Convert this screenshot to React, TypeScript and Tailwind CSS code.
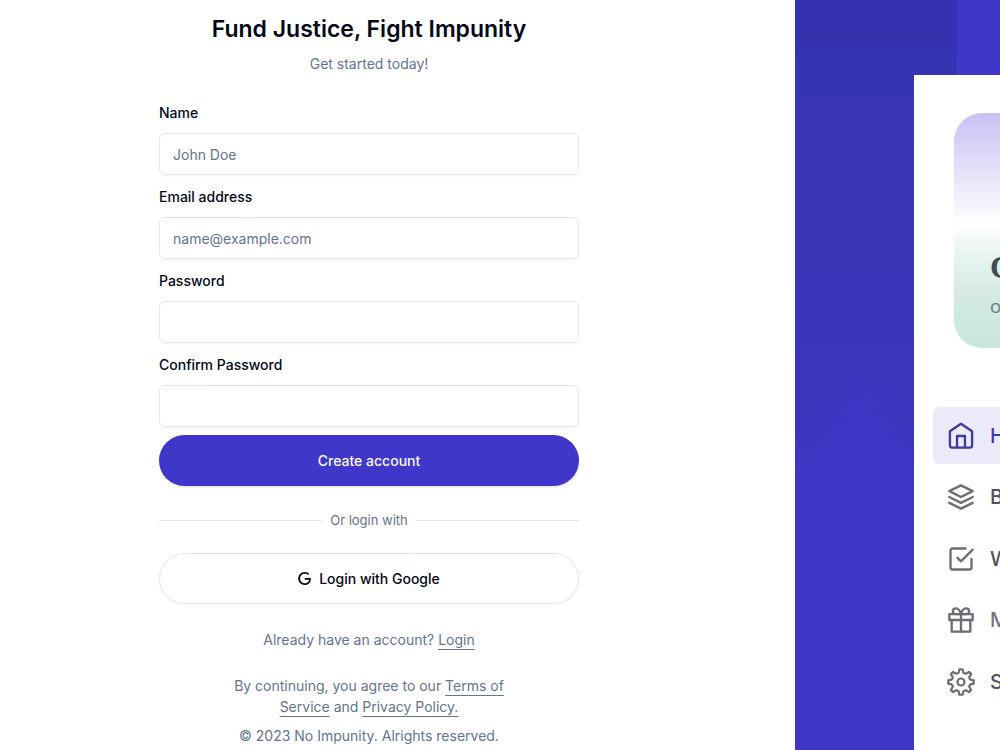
import { useState } from 'react';
import type { FormEvent, ReactNode } from 'react';
import { FiLayers, FiCheckSquare, FiGift } from 'react-icons/fi';
import { SiGoogle } from 'react-icons/si';
import clsx from 'clsx';

const fields = [
  { id: 'name', label: 'Name', type: 'text', placeholder: 'John Doe' },
  { id: 'email', label: 'Email address', type: 'email', placeholder: 'name@example.com' },
  { id: 'password', label: 'Password', type: 'password', placeholder: '' },
  { id: 'confirmPassword', label: 'Confirm Password', type: 'password', placeholder: '' },
];

function HomeIcon({ className }: { className?: string }) {
  return (
    <svg
      viewBox="0 0 24 24"
      fill="none"
      stroke="currentColor"
      strokeWidth="2"
      strokeLinejoin="round"
      className={className}
      aria-hidden="true"
    >
      <path d="M2.5 8 12 1.5 21.5 8v12a2 2 0 0 1-2 2h-15a2 2 0 0 1-2-2Z" />
      <path d="M8.6 22V12h6.8v10" />
    </svg>
  );
}

// 톱니 8개짜리 설정 아이콘
const gearPath = (() => {
  const points: string[] = [];
  for (let i = 0; i < 8; i++) {
    for (const [deg, r] of [[-7, 11], [7, 11], [14, 8.3], [22.5, 7.9], [31, 8.3]]) {
      const a = ((i * 45 + deg) * Math.PI) / 180;
      points.push(`${(12 + r * Math.sin(a)).toFixed(2)} ${(12 - r * Math.cos(a)).toFixed(2)}`);
    }
  }
  return `M${points.join('L')}Z`;
})();

function GearIcon({ className }: { className?: string }) {
  return (
    <svg
      viewBox="0 0 24 24"
      fill="none"
      stroke="currentColor"
      strokeWidth="1.9"
      strokeLinejoin="round"
      className={className}
      aria-hidden="true"
    >
      <path d={gearPath} />
      <circle cx="12" cy="12" r="3" />
    </svg>
  );
}

const navItems = [
  { label: 'H', icon: HomeIcon, active: true },
  { label: 'B', icon: FiLayers },
  { label: 'W', icon: FiCheckSquare },
  { label: 'M', icon: FiGift, muted: true },
  { label: 'S', icon: GearIcon },
];

function TextLink({ children }: { children: ReactNode }) {
  return (
    <a href="#" className="underline underline-offset-4 [text-decoration-skip-ink:none]">
      {children}
    </a>
  );
}

function SignUpForm() {
  const [values, setValues] = useState<Record<string, string>>({});

  const handleSubmit = (e: FormEvent) => {
    e.preventDefault();
  };

  return (
    <form onSubmit={handleSubmit}>
      <div className="flex flex-col gap-3">
        {fields.map((field) => (
          <div key={field.id} className="flex flex-col gap-2.5">
            <label htmlFor={field.id} className="text-sm font-medium">
              {field.label}
            </label>
            <input
              id={field.id}
              type={field.type}
              placeholder={field.placeholder}
              value={values[field.id] ?? ''}
              onChange={(e) => setValues({ ...values, [field.id]: e.target.value })}
              className="h-[42px] w-full rounded-md border border-slate-200 px-[13px] text-sm shadow-xs outline-none placeholder:text-slate-500"
            />
          </div>
        ))}
      </div>
      <button
        type="submit"
        className="mt-2 h-[51px] w-full rounded-full bg-[#3f37c9] text-sm font-medium text-slate-50 shadow-sm"
      >
        Create account
      </button>
    </form>
  );
}

function Preview() {
  return (
    <aside className="relative h-screen w-[205px] shrink-0 overflow-hidden bg-[#3f37c5]">
      {/* 배경 그라데이션 */}
      <svg className="absolute inset-0 h-full w-full" viewBox="0 0 205 750" preserveAspectRatio="none" aria-hidden="true">
        <defs>
          <linearGradient id="shade" x1="0" y1="0" x2="0" y2="1">
            <stop offset="0" stopColor="#3533ae" />
            <stop offset="0.6" stopColor="#3834b7" />
            <stop offset="1" stopColor="#3c36be" />
          </linearGradient>
          <filter id="soft" x="-20%" y="-20%" width="140%" height="140%">
            <feGaussianBlur stdDeviation="7" />
          </filter>
        </defs>
        <path
          d="M-40-40H240V480L118 446L82 396Q66 366 52 396L20 440L-40 476Z"
          fill="url(#shade)"
          filter="url(#soft)"
        />
        <rect x="162" width="43" height="75" fill="#3f37c5" />
      </svg>

      <div className="relative mt-[75px] ml-[119px] h-full bg-white pt-[38px]">
        <div className="ml-10 h-[235px] w-[280px] rounded-[28px] bg-[linear-gradient(#c9c1f4,#ffffff_48%,#f1f8f6_54%,#d3eae4_78%,#c8e6dc)] pt-[138px] pl-9">
          <p className="font-['Liberation_Serif',serif] text-[32px] leading-8 font-bold text-[#3f4f50]">C</p>
          <p className="mt-2.5 font-['Lato',sans-serif] text-[20px] leading-6 text-[#6f8583]">o</p>
        </div>
        <nav className="mt-[59px] ml-[19px] flex h-[303px] w-[300px] flex-col justify-between">
          {navItems.map(({ label, icon: Icon, active, muted }) => (
            <a
              key={label}
              href="#"
              className={clsx(
                'flex h-[57px] items-center gap-[15px] rounded-md pl-3.5 text-[20px] font-medium',
                active ? 'bg-[#eceaf8] text-[#40389f]' : muted ? 'text-[#73767c]' : 'text-[#50535a]',
              )}
            >
              <Icon className={clsx('size-7', active ? 'text-[#40389f]' : 'text-[#6b6e75]')} />
              {label}
            </a>
          ))}
        </nav>
      </div>
    </aside>
  );
}

export default function App() {
  return (
    <div className="flex min-h-screen overflow-hidden bg-white font-['Inter',sans-serif] text-[#020817]">
      <main className="flex flex-1 justify-center pt-3 pr-[57px]">
        <div className="w-full max-w-[420px]">
          <div className="flex flex-col gap-2 text-center">
            <h1 className="text-[23px] leading-[34px] font-semibold">Fund Justice, Fight Impunity</h1>
            <p className="text-sm text-slate-500">Get started today!</p>
          </div>

          <div className="mt-[29px]">
            <SignUpForm />
          </div>

          <div className="mt-6 flex items-center gap-2 text-[13px] leading-5 text-slate-500">
            <span className="h-px flex-1 bg-slate-200" />
            Or login with
            <span className="h-px flex-1 bg-slate-200" />
          </div>

          <button
            type="button"
            className="mt-[23px] flex h-[51px] w-full items-center justify-center gap-2 rounded-full border border-slate-200 text-sm font-medium shadow-xs"
          >
            <SiGoogle className="size-[13px]" />
            Login with Google
          </button>

          <div className="mt-[25px] text-center text-sm leading-[21px] text-slate-500">
            <p>
              Already have an account? <TextLink>Login</TextLink>
            </p>
            <p className="mt-[25px] px-16">
              By continuing, you agree to our <TextLink>Terms of Service</TextLink> and{' '}
              <TextLink>Privacy Policy.</TextLink>
            </p>
            <p className="mt-2">© 2023 No Impunity. Alrights reserved.</p>
          </div>
        </div>
      </main>
      <Preview />
    </div>
  );
}
